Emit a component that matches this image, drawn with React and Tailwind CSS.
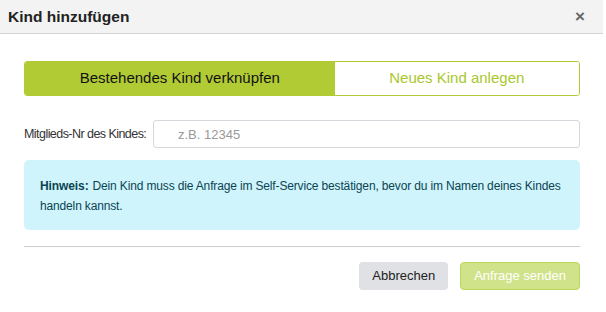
export default function App() {
  return (
    <div className="w-[606px] h-[312px] bg-white font-['Liberation_Sans',Arial,sans-serif]">
      <div className="w-[603px]">
        {/* Header */}
        <div className="h-[34px] bg-[#f3f3f3] border-b border-[#d4d4d4] flex items-center justify-between pl-[8px] pr-[18px]">
          <div className="text-[15.5px] font-bold text-[#222]">Kind hinzufügen</div>
          <div className="text-[17px] font-bold text-[#666] leading-none">×</div>
        </div>

        <div className="px-[24px] pt-[27px]">
          {/* Toggle */}
          <div className="flex h-[35px] w-[556px] rounded-[3px] border border-[#b1cb35] overflow-hidden text-[15px]">
            <div className="flex-auto flex items-center justify-center bg-[#b1cb35] text-[#111]">
              Bestehendes Kind verknüpfen
            </div>
            <div className="flex-auto flex items-center justify-center bg-white text-[#a9c72e]">
              Neues Kind anlegen
            </div>
          </div>

          {/* Input row */}
          <div className="flex items-center mt-[24px] w-[556px]">
            <label className="text-[12.5px] tracking-[-0.55px] whitespace-nowrap text-[#333] w-[129px]">Mitglieds-Nr des Kindes:</label>
            <input
              className="flex-1 h-[28px] border border-[#d5d8dc] rounded-[3px] px-[24px] text-[13px] text-[#333] placeholder:text-[#999] outline-none"
              placeholder="z.B. 12345"
            />
          </div>

          {/* Info */}
          <div className="mt-[12px] w-[556px] h-[70px] rounded-[5px] bg-[#cff4fc] px-[16px] pt-[16px] text-[12px] leading-[20px] text-[#0b4452]">
            <span className="font-bold tracking-[-0.1px] mr-[4px]">Hinweis:</span>
            <span className="tracking-[-0.15px]">Dein Kind muss die Anfrage im Self-Service bestätigen, bevor du im Namen deines Kindes handeln kannst.</span>
          </div>

          <div className="mt-[16px] w-[556px] border-t border-[#cccccc]"></div>

          {/* Buttons */}
          <div className="flex justify-end gap-[12px] mt-[15px] w-[556px]">
            <button className="h-[28px] px-[13px] rounded-[4px] bg-[#dfe1e5] text-[13px] text-[#222]">
              Abbrechen
            </button>
            <button className="h-[28px] px-[13px] rounded-[4px] bg-[#d1e38a] border border-[#bed65a] text-[13px] text-white">
              Anfrage senden
            </button>
          </div>
        </div>
      </div>
    </div>
  );
}
